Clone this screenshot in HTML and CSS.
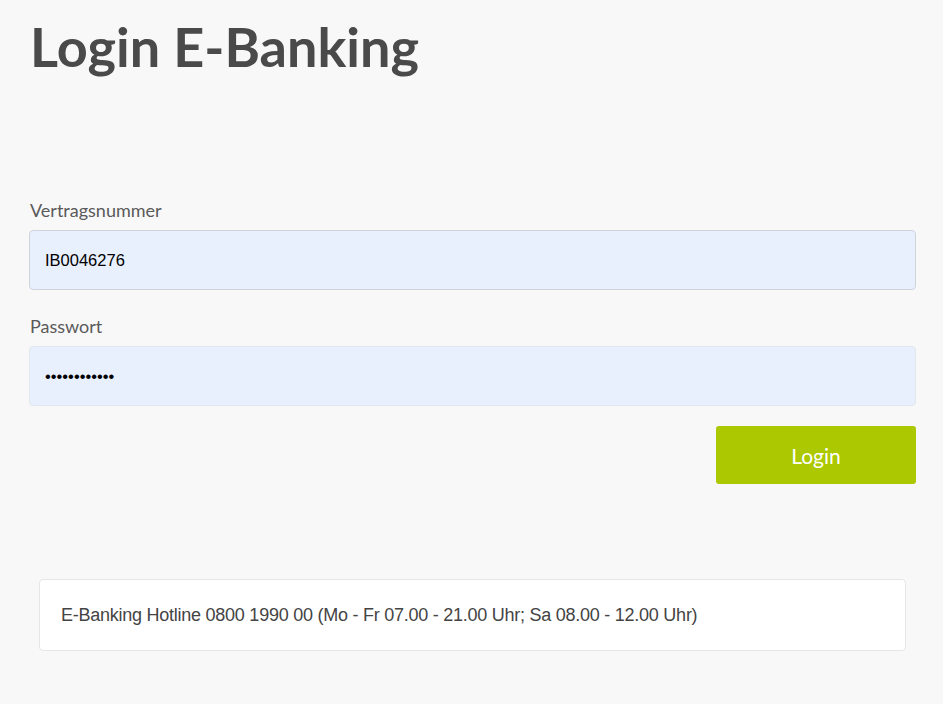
FILE: index.html
```html
<!DOCTYPE html>
<html lang="de">
<head>
<meta charset="utf-8">
<title>Login E-Banking</title>
<link rel="stylesheet" href="styles.css">
</head>
<body>
<main class="page">
  <h1 class="title">Login E-Banking</h1>
  <form class="form">
    <label class="label" for="vn">Vertragsnummer</label>
    <input class="field field-filled" id="vn" type="text" value="IB0046276">
    <label class="label label-second" for="pw">Passwort</label>
    <input class="field" id="pw" type="password" value="abcdefghijkl">
    <div class="actions">
      <button class="btn" type="button">Login</button>
    </div>
  </form>
  <div class="hotline">E-Banking Hotline 0800 1990 00 (Mo - Fr 07.00 - 21.00 Uhr; Sa 08.00 - 12.00 Uhr)</div>
</main>
</body>
</html>
```
FILE: styles.css
```css
html, body {
  margin: 0;
  padding: 0;
  background: #f8f8f8;
}
body {
  font-family: Lato, "Noto Sans", sans-serif;
  color: #4a4a4a;
}
.page {
  padding: 13px 27px 0 29px;
}
.title {
  margin: 0;
  font-family: Lato, sans-serif;
  font-weight: 700;
  font-size: 54px;
  line-height: 68px;
  color: #4a4a4a;
  padding-left: 1px;
}
.form {
  display: flex;
  flex-direction: column;
  margin-top: 118px;
}
.label {
  font-size: 18px;
  line-height: 22px;
  font-weight: 400;
  color: #5a5a5a;
  padding-left: 1px;
  margin-bottom: 9px;
}
.label-second {
  margin-top: 25px;
}
.field {
  box-sizing: border-box;
  height: 60px;
  width: 100%;
  border: 1px solid #e2e6ee;
  border-radius: 4px;
  background: #e8f0fe;
  padding: 0 15px;
  font-family: "Liberation Sans", Arial, sans-serif;
  font-size: 16.5px;
  color: #000;
  outline: none;
}
.field-filled {
  border-color: #cfd3dc;
}
.actions {
  display: flex;
  justify-content: flex-end;
  margin-top: 20px;
}
.btn {
  width: 200px;
  height: 58px;
  border: none;
  border-radius: 3px;
  background: #abc800;
  color: #fff;
  font-family: Lato, sans-serif;
  font-size: 21px;
  font-weight: 400;
  cursor: pointer;
}
.hotline {
  margin: 95px 10px 0 10px;
  background: #fff;
  border: 1px solid #e6e6e6;
  border-radius: 4px;
  padding: 0 21px;
  height: 70px;
  display: flex;
  align-items: center;
  font-family: "Liberation Sans", Arial, sans-serif;
  font-size: 18px;
  letter-spacing: -0.25px;
  color: #444;
}
```
